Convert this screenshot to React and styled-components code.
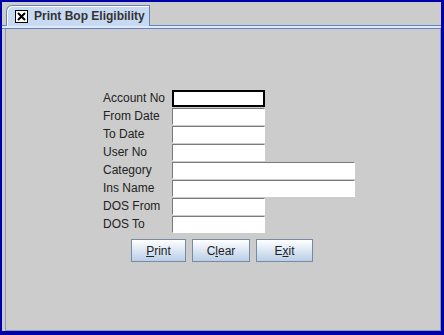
import { Fragment } from 'react';
import styled, { createGlobalStyle } from 'styled-components';

const GlobalStyle = createGlobalStyle`
  html, body {
    margin: 0;
    padding: 0;
    background: #0000a8;
  }
  * { box-sizing: border-box; }
`;

const Frame = styled.div`
  width: 444px;
  height: 335px;
  background: #0000a8;
  padding: 2px 3px 4px 2px;
  font-family: "Liberation Sans", Arial, sans-serif;
`;

const Inner = styled.div`
  height: 100%;
  background: #cccccc;
  display: flex;
  flex-direction: column;
`;

const TabStrip = styled.div`
  height: 24px;
  display: flex;
  align-items: flex-end;
  padding-left: 4px;
  border-bottom: 1px solid #6382bf;
`;

const Tab = styled.div`
  width: 144px;
  height: 21px;
  margin-bottom: -1px;
  background: #c8daf2;
  border: 1px solid #6382bf;
  border-bottom: none;
  border-top-left-radius: 6px;
  box-shadow: inset 1px 1px 0 #ffffff;
  display: flex;
  align-items: center;
  gap: 6px;
  padding-left: 8px;
  font-size: 12px;
  font-weight: bold;
  color: #333;
  position: relative;
  z-index: 1;
`;

const CloseBox = styled.span`
  width: 13px;
  height: 13px;
  border: 1px solid #000;
  display: flex;
  align-items: center;
  justify-content: center;
  background: #fff;
`;

const Strip = styled.div`
  height: 3px;
  background: #ddeafb;
  border-bottom: 1px solid #6382bf;
`;

const Content = styled.div`
  flex: 1;
  border-left: 1px solid #8a9ab8;
  border-right: 1px solid #8a9ab8;
  border-bottom: 1px solid #8a9ab8;
  margin: 0 0 0 3px;
  padding: 61px 0 0 97px;
`;

const Form = styled.div`
  display: grid;
  grid-template-columns: 69px auto;
  grid-auto-rows: 17px;
  row-gap: 1px;
  justify-items: start;
`;

const Label = styled.label`
  font-size: 12px;
  color: #222;
  line-height: 17px;
`;

const Field = styled.div`
  width: ${p => (p.$wide ? '183px' : '93px')};
  height: 17px;
  background: #fff;
  border: ${p => (p.$focused ? '2px solid #000' : '1px solid')};
  border-color: ${p => (p.$focused ? '#000' : '#7a7a7a #ffffff #ffffff #7a7a7a')};
`;

const Buttons = styled.div`
  display: flex;
  gap: 6px;
  margin: 6px 0 0 28px;
`;

const Button = styled.button`
  width: ${p => p.$w}px;
  height: 23px;
  border: 1px solid #7a8aa0;
  background: linear-gradient(#ffffff, #dfe9f5 45%, #b9cfe6);
  font-family: "Liberation Sans", Arial, sans-serif;
  font-size: 12px;
  color: #222;
  padding: 0;
  u { text-decoration: underline; }
`;

const fields = [
  ['Account No', false, true],
  ['From Date', false],
  ['To Date', false],
  ['User No', false],
  ['Category', true],
  ['Ins Name', true],
  ['DOS From', false],
  ['DOS To', false],
];

export default function App() {
  return (
    <Frame>
      <GlobalStyle />
      <Inner>
        <TabStrip>
          <Tab>
            <CloseBox>
              <svg width="9" height="9" viewBox="0 0 9 9">
                <path d="M1 1L8 8M8 1L1 8" stroke="#000" strokeWidth="2" />
              </svg>
            </CloseBox>
            Print Bop Eligibility
          </Tab>
        </TabStrip>
        <Strip />
        <Content>
          <Form>
            {fields.map(([label, wide, focused]) => (
              <Fragment key={label}>
                <Label>{label}</Label>
                <Field $wide={wide} $focused={focused} />
              </Fragment>
            ))}
          </Form>
          <Buttons>
            <Button $w={55}><u>P</u>rint</Button>
            <Button $w={58}>C<u>l</u>ear</Button>
            <Button $w={57}>E<u>x</u>it</Button>
          </Buttons>
        </Content>
      </Inner>
    </Frame>
  );
}
